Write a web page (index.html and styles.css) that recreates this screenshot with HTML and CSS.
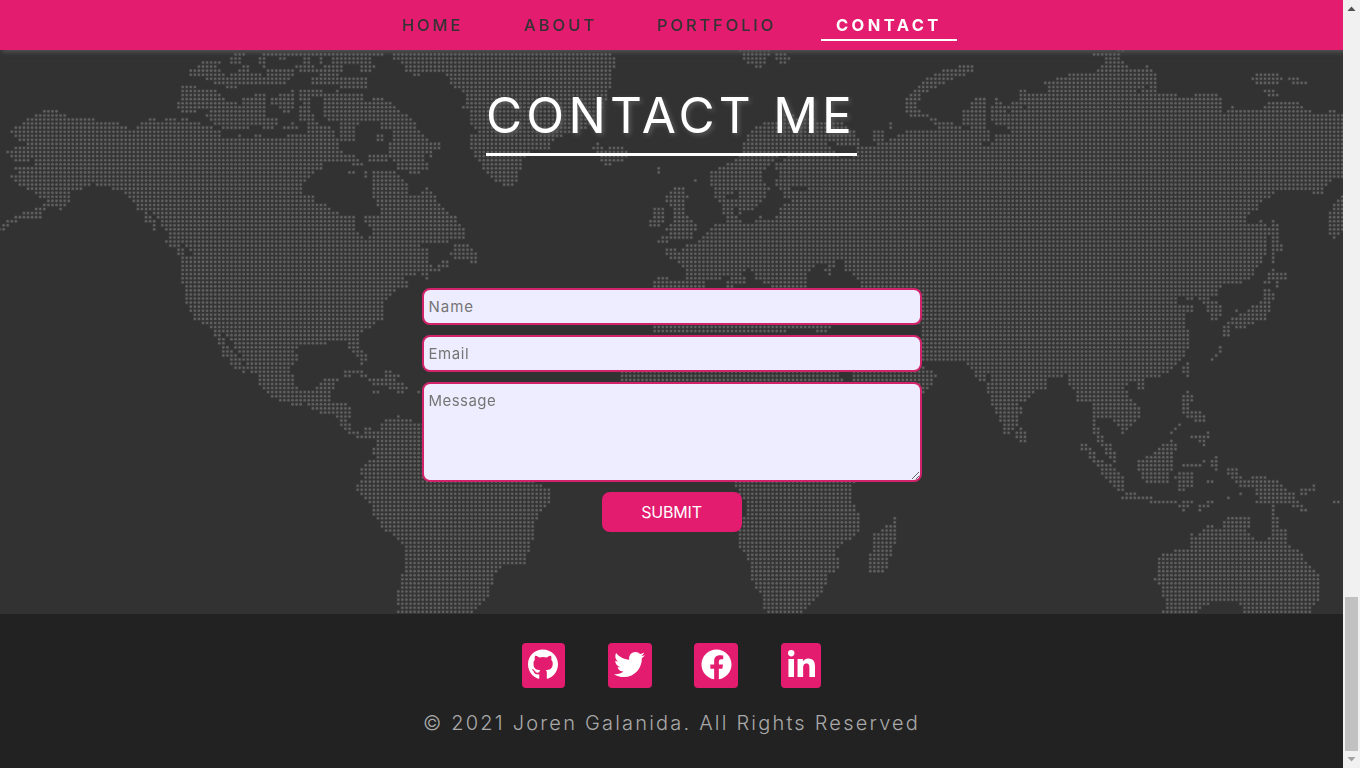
FILE: index.html
```html
<!DOCTYPE html>
<html lang="en">
<head>
<meta charset="utf-8">
<title>Joren Galanida - Contact</title>
<link rel="stylesheet" href="styles.css">
</head>
<body>
<div class="viewport">
  <div class="page">
    <header class="header">
      <nav class="nav">
        <a class="nav-link nav-home">HOME</a>
        <a class="nav-link nav-about">ABOUT</a>
        <a class="nav-link nav-portfolio">PORTFOLIO</a>
        <a class="nav-link nav-contact">CONTACT</a>
      </nav>
    </header>
    <main class="contact">
      <canvas class="map" id="map" width="1343" height="564"></canvas>
      <h1 class="title">CONTACT ME</h1>
      <form class="form">
        <input class="field" type="text" placeholder="Name">
        <input class="field email" type="text" placeholder="Email">
        <textarea class="field message" placeholder="Message"></textarea>
        <button class="submit" type="button">SUBMIT</button>
      </form>
    </main>
    <footer class="footer">
      <div class="social">
        <a class="tile github"><svg width="30" height="31" viewBox="0 0 496 512"><path d="M165.9 397.4c0 2-2.3 3.6-5.2 3.6-3.3.3-5.6-1.3-5.6-3.6 0-2 2.3-3.6 5.2-3.6 3-.3 5.6 1.3 5.6 3.6zM244.8 8C106.1 8 0 113.3 0 252c0 110.9 69.8 205.8 169.5 239.2 12.8 2.3 17.3-5.6 17.3-12.1 0-6.2-.3-40.4-.3-61.4 0 0-70 15-84.7-29.8 0 0-11.4-29.1-27.8-36.6 0 0-22.9-15.7 1.6-15.4 0 0 24.9 2 38.6 25.8 21.9 38.6 58.6 27.5 72.9 20.9 2.3-16 8.8-27.1 16-33.7-55.9-6.2-112.3-14.3-112.3-110.5 0-27.5 7.6-41.3 23.6-58.9-2.6-6.5-11.1-33.3 2.6-67.9 20.9-6.5 69 27 69 27 20-5.6 41.5-8.5 62.8-8.5s42.8 2.9 62.8 8.5c0 0 48.1-33.6 69-27 13.7 34.7 5.2 61.4 2.6 67.9 16 17.7 25.8 31.5 25.8 58.9 0 96.5-58.9 104.2-114.8 110.5 9.2 7.9 17 22.9 17 46.4 0 33.7-.3 75.4-.3 83.6 0 6.5 4.6 14.4 17.3 12.1C428.2 457.8 496 362.9 496 252 496 113.3 383.5 8 244.8 8zM97.200 352.900c-1.300 1-1 3.300.7 5.200 1.600 1.600 3.900 2.300 5.200 1 1.300-1 1-3.300-.7-5.200-1.600-1.600-3.900-2.300-5.200-1zM129.600 388.500c-1.600 1.300-1 4.300 1.300 6.200 2.300 2.300 5.200 2.600 6.500 1 1.300-1.300.7-4.300-1.300-6.200-2.200-2.300-5.200-2.600-6.500-1z"/></svg></a>
        <a class="tile twitter"><svg width="31" height="31" viewBox="0 0 512 512"><path d="M459.37 151.716c.325 4.548.325 9.097.325 13.645 0 138.72-105.583 298.558-298.558 298.558-59.452 0-114.68-17.219-161.137-47.106 8.447.974 16.568 1.299 25.34 1.299 49.055 0 94.213-16.568 130.274-44.832-46.132-.975-84.792-31.188-98.112-72.772 6.498.974 12.995 1.624 19.818 1.624 9.421 0 18.843-1.3 27.614-3.573-48.081-9.747-84.143-51.98-84.143-102.985v-1.299c13.969 7.797 30.214 12.67 47.431 13.319-28.264-18.843-46.781-51.005-46.781-87.391 0-19.492 5.197-37.36 14.294-52.954 51.655 63.675 129.3 105.258 216.365 109.807-1.624-7.797-2.599-15.918-2.599-24.04 0-57.828 46.782-104.934 104.934-104.934 30.213 0 57.502 12.67 76.67 33.137 23.715-4.548 46.456-13.32 66.599-25.34-7.798 24.366-24.366 44.833-46.132 57.827 21.117-2.273 41.584-8.122 60.426-16.243-14.292 20.791-32.161 39.308-52.628 54.253z"/></svg></a>
        <a class="tile facebook"><svg width="31" height="31" viewBox="0 0 512 512"><path d="M504 256C504 119 393 8 256 8S8 119 8 256c0 123.78 90.69 226.38 209.25 245V327.69h-63V256h63v-54.64c0-62.15 37-96.48 93.67-96.48 27.14 0 55.52 4.84 55.52 4.84v61h-31.28c-30.8 0-40.41 19.12-40.41 38.73V256h68.78l-11 71.69h-57.78V501C413.31 482.38 504 379.78 504 256z"/></svg></a>
        <a class="tile linkedin"><svg width="27" height="27" viewBox="0 0 448 448"><path d="M100.28 448H7.4V148.9h92.88zM53.79 108.1C24.09 108.1 0 83.5 0 53.8a53.79 53.79 0 0 1 107.58 0c0 29.7-24.1 54.3-53.79 54.3zM447.9 448h-92.68V302.4c0-34.7-.7-79.2-48.29-79.2-48.29 0-55.69 37.7-55.69 76.7V448h-92.78V148.9h89.08v40.8h1.3c12.4-23.5 42.69-48.3 87.88-48.3 94 0 111.28 61.9 111.28 142.3V448z"/></svg></a>
      </div>
      <p class="copyright">© 2021 Joren Galanida. All Rights Reserved</p>
    </footer>
  </div>
  <div class="scrollbar">
    <svg class="arrow arrow-up" width="17" height="17" viewBox="0 0 17 17"><path d="M4.500 11h8L8.500 6.500z"/></svg>
    <div class="thumb"></div>
    <svg class="arrow arrow-down" width="17" height="17" viewBox="0 0 17 17"><path d="M4.500 6h8L8.500 10.500z"/></svg>
  </div>
</div>
<script src="map.js"></script>
</body>
</html>
```
FILE: styles.css
```css
* { box-sizing: border-box; }
body { margin: 0; overflow: hidden; background: #222; font-family: Inter, "Open Sans", sans-serif; }
.viewport { display: flex; width: 1360px; height: 768px; }
.page { width: 1343px; height: 768px; display: flex; flex-direction: column; overflow: hidden; }
.header { position: relative; z-index: 2; flex: none; height: 50px; background: #e31c6f; box-shadow: 2px 2px 5px #555; }
.nav { display: flex; height: 50px; padding-left: 402px; }
.nav-link { color: #333; font-size: 16.5px; font-weight: 500; line-height: 50px; white-space: nowrap; }
.nav-home { width: 122px; letter-spacing: 2.8px; }
.nav-about { width: 133px; letter-spacing: 3px; }
.nav-portfolio { width: 164px; letter-spacing: 2.85px; }
.nav-contact { width: 136px; height: 41px; padding-left: 15px; letter-spacing: 3.4px; font-weight: 700; color: #fff; border-bottom: 2px solid #fff; }
.contact { position: relative; flex: none; height: 564px; background: #323232; display: flex; flex-direction: column; align-items: center; }
.map { position: absolute; left: 0; top: 0; }
.title { position: relative; width: 371px; height: 76px; margin: 30px 0 0; padding-top: 5px; border-bottom: 3px solid #fff; color: #fff; font-size: 49.5px; line-height: 60px; font-weight: 400; letter-spacing: 4.200px; white-space: nowrap; text-shadow: 2px 2px 5px #5c5c5c; }
.form { position: relative; width: 500px; margin-top: 132px; display: flex; flex-direction: column; align-items: center; gap: 10px; }
.field { display: block; width: 500px; height: 37px; margin: 0; padding: 0 5px; border: 2px solid #d02369; border-radius: 8px; background: #eeedff; font: 400 15px Inter, sans-serif; letter-spacing: 1px; outline: 0; }
.field::placeholder { color: #757575; }
.email { letter-spacing: 0.55px; }
.message { height: 100px; padding: 7px 5px; letter-spacing: 0.45px; }
.submit { width: 140px; height: 40px; border: 0; border-radius: 8px; background: #e31c6f; color: #fff; font: 400 16px Inter, sans-serif; letter-spacing: -0.2px; }
.footer { flex: 1; background: #222; }
.social { display: flex; margin: 29px 0 0 522px; }
.tile { height: 45px; border-radius: 4px; background: #e31c6f; padding: 6px 0 0 6px; }
.tile svg { display: block; fill: #fff; }
.github { width: 43px; margin-right: 43px; }
.twitter { width: 44px; margin-right: 42px; }
.facebook { width: 44px; margin-right: 43px; padding-left: 7px; }
.linkedin { width: 40px; padding: 7px 0 0 7px; }
.copyright { margin: 20px 0 0 423px; color: #a9a9a9; font-size: 20px; line-height: 30px; font-weight: 300; letter-spacing: 2.2px; white-space: nowrap; }
.scrollbar { width: 17px; height: 768px; background: #f1f1f1; display: flex; flex-direction: column; }
.thumb { width: 13px; height: 154px; margin: 580px 0 0 2px; background: #c1c1c1; }
.arrow { display: block; flex: none; }
.arrow-up { fill: #505050; }
.arrow-down { fill: #a3a3a3; }
```
FILE: map.js
```js
// World map drawn as a dot grid. Each sheet has an origin and a scale
// (units per pixel); a dot is drawn where it falls on land and not in sea.
const sheets = [
  { x: 0, y: 40, k: 3, land: [
    "30,275 50,260 75,238 105,222 150,208 195,222 205,234 280,234 290,245 355,246 385,265 405,265 425,248 460,234 475,245 510,234 535,242 550,234 600,246 630,262 665,270 670,290 700,290 715,284 745,292 780,284 810,294 860,292 865,286 920,286 925,230 955,240 960,262 990,262 1005,280 1022,300 1022,370 990,365 975,370 965,388 945,392 940,405 925,415 905,445 910,465 940,468 950,490 980,492 995,510 1022,515 1022,845 585,845 575,800 560,780 556,740 543,725 543,660 530,630 510,622 495,605 510,600 505,575 485,560 480,540 460,530 450,515 410,510 400,490 375,460 340,450 330,440 290,438 275,430 250,445 215,450 205,460 210,480 185,512 165,500 130,510 125,535 70,535 45,548 15,570 0,572 0,555 30,540 70,520 105,505 130,495 140,480 115,470 95,455 65,440 50,425 30,415 35,405 60,395 45,385 60,378 100,378 105,360 90,360 65,365 40,360 20,337 45,320 80,325 90,320 75,310 50,295 45,285",
    "430,510 445,520 465,545 465,575 450,555 435,550", "-4,560 4,560 4,575 -4,575",
    "530,205 535,185 550,175 543,142 555,136 590,136 600,150 650,152 680,178 705,178 718,192 730,175 760,175 765,160 795,162 798,195 800,230 845,240 825,268 780,262 750,260 745,272 690,268 665,268 640,250 615,228 625,210 600,208 585,217 550,217",
    "565,108 568,88 595,80 600,64 660,64 665,75 645,82 680,105 715,95 725,76 748,76 750,98 785,98 780,132 730,132 705,147 680,142 655,132 620,122 600,108",
    "700,38 735,38 737,48 717,70 690,72 690,52", "787,36 1022,34 1022,48 787,48", "775,48 797,48 797,84 775,74", "790,86 882,86 882,104 855,133 787,133 785,106 810,100",
    "835,50 860,50 860,62 835,62", "910,48 930,48 935,75 960,90 1022,88 1022,133 940,133 935,118 965,100 900,98 880,76 905,68", "958,50 968,50 968,74 958,74", "995,48 1022,48 1022,82 970,82 995,70",
    "810,175 870,152 880,150 895,188 870,220 840,212 835,195 815,194", "895,152 965,148 970,170 930,176 930,210 950,240 900,250", "970,185 975,160 1022,148 1022,245 985,245 970,220", "850,260 885,245 895,268 850,268"
  ], sea: ["545,608 560,608 560,620 545,620", "553,622 570,622 578,650 553,650", "625,90 640,98 618,102", "885,176 905,182 900,195 885,195"] },
  { x: 340, y: 40, k: 3, land: [
    "155,35 820,35 825,85 808,95 815,120 805,165 790,200 770,240 740,265 700,280 655,290 625,328 575,325 550,365 530,420 518,440 500,440 465,425 440,400 415,365 395,330 387,290 410,275 390,250 390,210 365,205 380,190 365,150 330,135 325,110 310,98 240,98 235,110 200,98 185,75 180,60 160,60",
    "0,35 130,35 130,48 95,55 105,80 90,98 0,98", "0,106 85,106 82,140 45,148 0,148",
    "0,160 65,162 75,190 85,180 120,172 165,198 200,225 225,245 225,270 250,280 265,300 300,312 302,330 275,330 275,352 250,340 265,385 240,403 205,403 200,390 170,388 170,365 145,355 140,365 85,365 87,345 150,342 145,315 160,300 155,265 125,265 110,242 75,240 50,260 45,305 25,312 0,308",
    "108,280 132,280 132,305 108,305", "0,335 20,340 60,353 68,378 50,376 0,367", "25,393 46,393 46,403 25,403", "70,392 82,392 82,414 70,414",
    "95,392 160,392 200,430 205,465 240,465 260,440 285,465 300,495 345,528 375,565 375,600 325,600 320,610 245,610 245,622 267,625 267,670 285,680 320,658 327,685 275,697 260,720 235,700 195,710 205,742 160,745 150,765 120,790 130,845 -2,845 -2,526 45,528 50,575 80,600 95,585 90,560 70,545 75,526 120,520 110,495 97,475 100,440",
    "330,640 342,612 385,612 412,640 412,672 392,670 380,658 340,658", "755,325 765,308 778,312 790,330 820,320 855,322 865,345 845,367 815,367 810,378 790,376 780,350 765,338", "950,380 962,380 962,403 950,403"
  ], sea: ["15,68 55,68 55,100 15,100"] },
  { x: 0, y: 0, k: 1, land: ["738,50 772,50 765,65 760,69 746,64", "774,53 787,53 792,60 785,65 774,60", "870,132 885,131 886,139 871,143", "888,121 891,121 894,129 888,129", "975,315 1025,315 1025,335 975,335"] },
  { x: 640, y: 130, k: 3, land: [
    "210,155 212,128 245,112 270,98 300,75 310,45 325,15 340,-5 370,-20 400,-25 435,-45 500,-42 565,-20 600,-24 640,0 660,30 667,48 700,45 735,35 800,5 830,0 1022,0 1022,755 1010,740 990,715 975,697 850,695 840,580 580,580 560,615 526,615 526,597 440,600 435,615 405,615 370,615 290,595 270,585 50,585 38,600 38,480 40,455 55,440 135,450 135,420 125,400 100,390 77,378 77,355 120,360 135,345 170,340 200,305 225,285 265,280 248,250 250,225 240,215 222,200",
    "38,590 290,590 370,605 375,615 38,615", "400,598 440,598 440,615 400,615", "-60,725 600,725 600,762 -60,762", "600,745 635,725 850,705 890,737 860,770 848,795 600,800",
    "80,195 100,173 133,173 130,190 147,202 130,235 147,265 170,288 158,327 90,327 85,340 50,340 60,320 85,310 75,290 90,290 100,265 100,240 78,220", "38,237 74,233 74,265 60,292 26,292 34,260", "50,112 61,112 61,133 50,133", "160,148 171,148 171,158 160,158"
  ], sea: ["560,34 600,45 655,50 650,65 625,82 610,95 575,58", "420,75 440,68 440,82 405,102 415,140 405,160 430,190 430,205 450,205 448,220 425,225 400,270 355,260 330,280 300,270 280,240 285,225 300,250 330,245 365,220 375,200 388,175 365,150 370,120 395,105", "450,171 500,171 500,182 455,182", "262,200 290,183 295,195 280,210 265,215", "500,480 500,440 530,403 560,400 555,422 570,438 590,395 610,395 610,418 635,435 660,455 663,480", "195,480 200,455 245,452 250,440 270,440 258,455 258,480", "278,480 290,465 320,465 325,460 305,430 320,413 340,430 345,450 385,462 395,480", "600,725 637,725 637,755 612,755 612,740"] },
  { x: 900, y: 40, k: 3, land: [
    "15,210 15,175 40,152 55,135 80,115 105,100 140,88 185,78 222,76 222,97 180,110 150,120 120,135 90,153 65,165 50,190 60,210 85,223 110,240 125,247 160,247 162,258 188,258 188,268 112,268 90,245 75,233 40,233",
    "0,285 20,271 180,271 190,250 187,210 210,208 212,185 225,173 258,173 265,190 280,190 285,173 305,190 320,195 340,182 355,190 357,150 378,150 382,160 435,160 445,155 428,127 465,124 475,112 505,102 540,98 542,88 550,98 590,98 600,75 615,68 640,62 588,48 565,32 662,32 662,845 0,845"
  ], sea: ["258,190 272,195 275,250 330,265 330,280 285,275 280,305 265,320 247,318 248,308 270,300 262,260", "185,258 212,258 212,270 185,270", "367,196 380,196 380,208 367,208", "318,208 330,208 330,220 318,220", "600,50 610,50 610,62 600,62"] },
  { x: 1120, y: 40, k: 3, land: [
    "-5,30 12,30 12,40 -5,40", "-5,62 12,62 22,76 30,86 75,86 80,74 88,76 95,88 110,105 108,150 115,160 170,160 185,173 215,172 222,160 280,160 305,175 305,215 320,220 332,198 340,198 345,210 430,210 440,185 535,185 550,205 575,215 620,222 625,210 645,210 655,220 672,220 672,415 640,420 615,440 608,465 578,465 565,450 540,450 475,453 440,475 420,490 412,512 385,525 385,548 415,552 420,540 428,550 440,560 440,640 415,680 390,720 350,732 300,740 290,768 270,770 280,785 305,790 305,825 292,842 275,842 260,812 245,785 225,770 215,785 220,815 193,820 208,885 195,910 -5,910",
    "440,580 455,540 463,540 475,555 475,605 490,615 487,635 463,630 463,675 455,675 455,600 443,588", "455,683 465,695 500,698 500,720 477,722 475,744 465,740 460,725 430,730 440,700",
    "430,745 445,745 463,765 450,805 438,840 390,855 362,868 345,868 335,856 330,892 307,892 307,855 330,832 375,820 395,798 420,785 430,770", "345,808 352,808 352,818 345,818", "672,465 640,488 625,520 625,575 640,600 660,585 672,560",
    "393,120 405,100 477,100 487,120 470,135 405,135", "503,113 535,113 562,128 560,135 515,132", "430,148 462,148 475,170 440,170"
  ], sea: ["160,785 185,760 195,768 200,780 220,790 185,795 175,807 162,800", "75,140 85,140 85,148 75,148", "50,152 60,152 60,160 50,160"] },
  { x: 1020, y: 300, k: 3, land: [
    "0,0 480,0 470,15 485,15 500,30 495,40 495,80 508,90 508,135 500,155 480,182 450,217 410,235 375,240 371,268 350,268 352,240 340,240 315,262 325,285 350,308 360,325 360,355 345,365 320,390 312,404 303,404 300,380 285,365 255,350 240,352 225,375 240,385 250,420 275,430 288,460 288,488 265,478 245,440 230,425 218,402 218,300 190,304 170,305 165,280 145,255 145,220 130,220 130,233 85,235 80,265 45,275 20,290 0,307",
    "486,210 500,186 508,190 508,232 498,230", "597,138 604,138 604,158 580,185 570,182 597,158", "486,290 498,272 518,285 518,305 508,315 520,333 545,335 557,350 555,365 545,365 530,378 520,362 500,350 486,343", "450,402 476,370 484,376 456,406", "450,415 460,415 460,430 450,430", "512,412 525,393 530,405 545,405 568,393 568,415 555,440 545,430 535,420",
    "352,480 370,480 375,465 400,465 425,432 470,430 470,448 462,455 460,495 450,520 445,545 390,550 365,537 352,505", "180,430 202,430 215,450 240,480 270,490 278,488 290,515 312,530 312,575 290,572 250,530 240,505 205,475 200,453 180,453", "303,600 305,590 315,575 350,575 352,587 395,590 400,600 470,602 470,612 385,612 380,600",
    "485,602 520,602 520,612 495,635 475,622", "463,530 475,515 520,515 520,560 495,558 490,575 475,574 480,550", "486,492 542,492 548,482 556,482 545,502 486,502", "524,628 560,602 580,602 580,612 540,634", "570,485 585,468 592,470 592,512 570,500", "560,540 580,540 580,550 560,550", "620,590 630,590 630,600 620,600", "657,577 667,577 667,587 657,587", "936,600 960,600 960,610 936,610",
    "620,503 655,505 670,540 690,540 693,528 738,528 742,540 780,540 800,568 825,575 825,600 860,625 860,635 840,632 815,618 800,605 760,618 750,610 705,612 715,595 705,570 690,562 660,560 640,535 620,525", "838,568 875,565 875,553 887,553 885,577 845,588",
    "400,842 400,830 412,825 412,772 440,760 475,748 510,745 510,700 530,705 560,675 580,675 585,685 610,685 610,662 620,650 692,650 692,672 680,690 690,710 730,722 750,712 755,690 753,615 765,615 767,645 778,655 778,685 800,685 800,720 815,745 845,755 855,785 885,805 897,830 897,905 878,925 875,945 670,945 665,915 640,905 580,905 545,922 520,945 425,945 435,915 425,880 425,860"
  ] },
  { x: 720, y: 330, k: 3, land: [
    "600,0 962,0 962,180 940,192 915,215 895,222 907,232 907,252 895,260 895,290 880,303 865,315 848,315 845,285 825,250 812,210 800,182 800,155 775,155 765,140 755,118 735,97 612,97", "885,300 905,290 920,315 920,340 900,340 885,325", "590,105 640,120 654,137 625,180 608,194 590,190",
    "40,452 405,452 395,470 395,520 407,525 418,560 418,605 380,635 345,655 357,685 357,715 345,728 325,728 318,768 280,820 240,852 145,852 128,835 128,790 105,775 92,745 90,695 68,665 55,640 55,605 70,570 80,520 65,510", "445,730 445,670 458,660 458,606 480,606 495,583 515,583 520,560 528,560 528,630 515,670 502,720 490,730"
  ], sea: ["798,130 810,135 810,155 798,155"] },
  { x: 180, y: 280, k: 3, land: [
    "0,0 680,0 685,24 655,25 635,50 605,70 610,105 580,135 545,160 537,200 550,210 562,230 555,255 540,252 530,225 515,215 500,190 480,182 445,182 435,195 385,195 345,205 354,240 335,265 340,300 360,328 400,330 430,295 478,295 460,330 450,368 500,368 514,380 514,415 495,415 510,435 530,458 550,460 553,440 575,440 572,455 595,450 605,430 615,416 650,418 652,403 660,405 662,425 675,416 698,418 700,428 726,430 1065,430 1065,605 1110,630 1110,665 1085,695 1070,720 1060,770 1040,840 1035,855 965,855 945,890 925,945 900,975 875,1005 650,1005 660,985 650,965 650,930 662,925 662,880 673,870 673,800 650,770 610,750 580,705 575,680 545,648 528,635 528,615 552,600 540,585 540,565 560,550 585,530 578,515 578,503 590,500 590,478 560,470 545,478 505,465 480,440 480,430 490,425 465,415 465,403 430,403 395,390 395,375 370,372 340,378 305,365 280,350 255,340 238,315 235,280 210,278 190,240 165,205 145,175 130,160 100,145 75,135 45,115 25,85 15,60 15,20 0,12",
    "98,145 130,160 140,190 155,210 175,230 196,265 196,280 150,255 145,235 125,230 125,195 110,195", "490,292 490,270 550,270 565,292 610,292 615,270 635,270 637,285 660,285 658,297 645,297 645,305 668,310 683,320 683,330 670,342 650,340 650,328 628,328 610,312 580,314 565,300 540,295 540,283 515,283 510,292", "578,332 598,332 598,343 578,343", "712,332 720,332 720,342 712,342"
  ], sea: ["120,158 140,170 138,180 120,170", "590,65 600,65 600,80 590,80"] }
];

const toPath = (list, sheet) => {
  const shape = new Path2D();
  list.split(" ").forEach((pair, i) => {
    const [px, py] = pair.split(",").map(Number);
    const x = sheet.x + px / sheet.k, y = sheet.y + py / sheet.k;
    i ? shape.lineTo(x, y) : shape.moveTo(x, y);
  });
  shape.closePath();
  return shape;
};

const ctx = document.getElementById("map").getContext("2d");
const layers = sheets.map(s => ({ land: s.land.map(p => toPath(p, s)), sea: (s.sea || []).map(p => toPath(p, s)) }));
const pitch = 4.069;
for (let y = 1.5; y < 614; y += pitch) {
  if (y < 48) continue;
  for (let x = -0.45; x < 1345; x += pitch) {
    const on = layers.some(l => l.land.some(p => ctx.isPointInPath(p, x, y)) && !l.sea.some(p => ctx.isPointInPath(p, x, y)));
    if (!on) continue;
    ctx.fillStyle = "#383838";
    ctx.fillRect(x - 2, y - 52, 4, 4);
    ctx.fillStyle = "#606060";
    ctx.beginPath();
    ctx.arc(x, y - 50, 1.3, 0, Math.PI * 2);
    ctx.fill();
  }
}
```
